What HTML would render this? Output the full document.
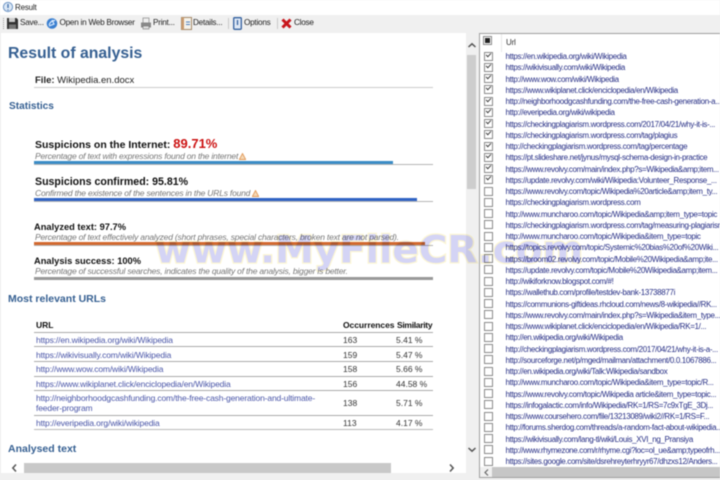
<!DOCTYPE html>
<html><head><meta charset="utf-8"><style>
html,body{margin:0;padding:0;width:720px;height:480px;overflow:hidden;background:#f0f0f0}
#w{position:absolute;left:0;top:0;width:720px;height:480px;overflow:hidden;background:#f0f0f0;font-family:"Liberation Sans",sans-serif;filter:blur(.45px)}
.a{position:absolute;white-space:nowrap}
.t{font-size:8.2px;color:#222;top:17px;line-height:12px;letter-spacing:-.25px}
.h{color:#366092;font-weight:bold}
.b{font-weight:bold;color:#111}
.i{font-style:italic;font-size:8.5px;letter-spacing:-.2px;color:#777}
.l{height:1px;background:#b5b5b5;left:34px;width:399px}
.u{font-size:8.5px;letter-spacing:-.15px;color:#4a56a8;left:36px}
.n{font-size:8.5px;color:#333}
.r{position:absolute;left:480px;width:240px;height:11px}
.c{position:absolute;left:3.5px;top:.5px;width:7px;height:7px;border:1px solid #8a8a8a;background:#fff}
.c.k:after{content:"";position:absolute;left:1px;top:0;width:4px;height:2px;border-left:1px solid #444;border-bottom:1px solid #444;transform:rotate(-45deg)}
.r span{position:absolute;left:25.5px;top:0;font-size:8px;line-height:11px;color:#262e85;letter-spacing:-.34px;white-space:nowrap}
</style></head><body><div id="w">
<div class="a" style="left:0;top:0;width:720px;height:15px;background:#fff"></div>
<svg class="a" style="left:2px;top:1px" width="12" height="12" viewBox="0 0 12 12"><circle cx="6" cy="6" r="4.6" fill="#dbe8f6" stroke="#6d94c4"/><path d="M6 3v4M6 8.5v1" stroke="#3d6ba8" stroke-width="1.3"/></svg>
<div class="a" style="left:15px;top:2px;font-size:8px;line-height:12px;color:#222;letter-spacing:-.2px">Result</div>

<div class="a" style="left:3px;top:18px;width:1px;height:11px;border-left:1px dotted #999"></div>
<svg class="a" style="left:7px;top:18px" width="11" height="11" viewBox="0 0 11 11"><path d="M0 0h9.5l1.5 1.5V11H0z" fill="#333"/><rect x="2" y="0" width="6" height="4" fill="#ccc"/><rect x="2" y="6.5" width="7" height="4.5" fill="#777"/></svg>
<div class="a t" style="left:20px">Save...</div>
<svg class="a" style="left:46px;top:17px" width="12" height="13" viewBox="0 0 12 13"><circle cx="6" cy="6.5" r="5.3" fill="#3a7fd0"/><path d="M3 8c1-3 3-4.500 6-4.500M6 3l2 4-5 2" fill="none" stroke="#dcecff" stroke-width="1.2"/></svg>
<div class="a t" style="left:59.500px">Open in Web Browser</div>
<svg class="a" style="left:140px;top:17px" width="12" height="13" viewBox="0 0 12 13"><rect x="3" y="1" width="6" height="5" fill="#eee" stroke="#888" stroke-width=".7"/><rect x="1" y="5.500" width="10" height="5" fill="#888"/><rect x="3" y="9" width="6" height="3" fill="#ddd" stroke="#777" stroke-width=".6"/></svg>
<div class="a t" style="left:153px">Print...</div>
<svg class="a" style="left:181px;top:17px" width="11" height="13" viewBox="0 0 11 13"><rect x=".5" y=".5" width="10" height="12" fill="#f5f2ea" stroke="#a58a68"/><rect x=".5" y=".5" width="2.500" height="12" fill="#c99a6e"/><path d="M5 5h4M5 7.500h4" stroke="#4d7fc0"/></svg>
<div class="a t" style="left:193px">Details...</div>
<div class="a" style="left:228px;top:18px;width:1px;height:11px;background:#c8c8c8"></div>
<svg class="a" style="left:233px;top:17px" width="9" height="13" viewBox="0 0 9 13"><rect x=".7" y=".7" width="7.600" height="11.600" rx="1" fill="#dfe8f5" stroke="#33609f" stroke-width="1.300"/><path d="M4.500 3v5" stroke="#33609f" stroke-width="1.300"/></svg>
<div class="a t" style="left:244px">Options</div>
<div class="a" style="left:277px;top:18px;width:1px;height:11px;background:#c8c8c8"></div>
<svg class="a" style="left:281px;top:18px" width="11" height="11" viewBox="0 0 11 11"><path d="M1.500 1.500l8 8M9.500 1.500l-8 8" stroke="#c8161c" stroke-width="3"/></svg>
<div class="a t" style="left:294px">Close</div>

<div class="a" style="left:1px;top:33px;width:465px;height:440px;background:#fff"></div>
<div class="a h" style="left:8px;top:44px;font-size:15.800px;line-height:20px">Result of analysis</div>
<div class="a" style="left:35px;top:74px;font-size:9.500px;line-height:13px;color:#222"><b>File:</b> Wikipedia.en.docx</div>
<div class="a" style="left:34px;top:87px;width:399px;height:1px;background:#ccc"></div>
<div class="a h" style="left:9px;top:100px;font-size:10.100px;line-height:13px">Statistics</div>

<div class="a b" style="left:35px;top:137px;font-size:10.500px;line-height:14px">Suspicions on the Internet: <span style="color:#cc1111;font-size:13px;font-weight:bold">89.71%</span></div>
<div class="a i" style="left:35px;top:151px;line-height:11px">Percentage of text with expressions found on the internet</div>
<svg class="a" style="left:239px;top:153px" width="7" height="7"><path d="M3.500 .5L6.700 6.500H.3z" fill="#f4d9b8" stroke="#e29a5a" stroke-width=".9"/></svg>
<div class="a" style="left:34px;top:161px;width:359px;height:3px;background:#3a8cc6"></div>
<div class="a l" style="top:164px"></div>

<div class="a b" style="left:35px;top:175px;font-size:10.600px;line-height:14px">Suspicions confirmed: 95.81%</div>
<div class="a i" style="left:35px;top:188px;line-height:11px">Confirmed the existence of the sentences in the URLs found</div>
<svg class="a" style="left:252px;top:190px" width="7" height="7"><path d="M3.500 .5L6.700 6.500H.3z" fill="#f4d9b8" stroke="#e29a5a" stroke-width=".9"/></svg>
<div class="a" style="left:34px;top:197.500px;width:383px;height:3px;background:#3063c4"></div>
<div class="a l" style="top:201px"></div>

<div class="a b" style="left:34px;top:221px;font-size:9.300px;line-height:12px">Analyzed text: 97.7%</div>
<div class="a i" style="left:35px;top:232px;line-height:11px">Percentage of text effectively analyzed (short phrases, special characters, broken text are not parsed).</div>
<div class="a" style="left:34px;top:242px;width:391px;height:3.500px;background:#d2692f"></div>
<div class="a l" style="top:245px"></div>

<div class="a b" style="left:34px;top:255px;font-size:9.300px;line-height:12px">Analysis success: 100%</div>
<div class="a i" style="left:35px;top:266px;line-height:11px">Percentage of successful searches, indicates the quality of the analysis, bigger is better.</div>
<div class="a" style="left:34px;top:276.500px;width:399px;height:3.500px;background:#999"></div>

<div class="a h" style="left:8px;top:293px;font-size:10.500px;line-height:13px">Most relevant URLs</div>
<div class="a b" style="left:36px;top:320px;font-size:8.500px;line-height:11px">URL</div>
<div class="a b" style="left:343px;top:320px;font-size:8.500px;line-height:11px;letter-spacing:-.05px">Occurrences</div>
<div class="a b" style="left:397px;top:320px;font-size:8.500px;line-height:11px;letter-spacing:-.3px">Similarity</div>
<div class="a" style="left:34px;top:331.500px;width:399px;height:1px;background:#aaa"></div>
<div class="a u" style="top:334px;line-height:12px">https://en.wikipedia.org/wiki/Wikipedia</div><div class="a n" style="left:343px;top:334px;line-height:12px">163</div><div class="a n" style="left:396px;top:334px;line-height:12px">5.41 %</div>
<div class="a l" style="top:346px;background:#aaa"></div>
<div class="a u" style="top:348.500px;line-height:12px">https://wikivisually.com/wiki/Wikipedia</div><div class="a n" style="left:343px;top:348.500px;line-height:12px">159</div><div class="a n" style="left:396px;top:348.500px;line-height:12px">5.47 %</div>
<div class="a l" style="top:361px;background:#aaa"></div>
<div class="a u" style="top:363px;line-height:12px">http://www.wow.com/wiki/Wikipedia</div><div class="a n" style="left:343px;top:363px;line-height:12px">158</div><div class="a n" style="left:396px;top:363px;line-height:12px">5.66 %</div>
<div class="a l" style="top:375.500px;background:#aaa"></div>
<div class="a u" style="top:377.500px;line-height:12px">https://www.wikiplanet.click/enciclopedia/en/Wikipedia</div><div class="a n" style="left:343px;top:377.500px;line-height:12px">156</div><div class="a n" style="left:396px;top:377.500px;line-height:12px">44.58 %</div>
<div class="a l" style="top:390px;background:#aaa"></div>
<div class="a u" style="top:393px;line-height:10px">http://neighborhoodgcashfunding.com/the-free-cash-generation-and-ultimate-<br>feeder-program</div><div class="a n" style="left:343px;top:397px;line-height:12px">138</div><div class="a n" style="left:396px;top:397px;line-height:12px">5.71 %</div>
<div class="a l" style="top:414.500px;background:#aaa"></div>
<div class="a u" style="top:416.500px;line-height:12px">http://everipedia.org/wiki/wikipedia</div><div class="a n" style="left:343px;top:416.500px;line-height:12px">113</div><div class="a n" style="left:396px;top:416.500px;line-height:12px">4.17 %</div>
<div class="a l" style="top:429px;background:#bbb"></div>
<div class="a h" style="left:8px;top:443px;font-size:10.500px;line-height:13px">Analysed text</div>

<svg class="a" style="left:467px;top:42px" width="10" height="7"><path d="M1.500 5L5 1.800 8.500 5" fill="none" stroke="#555" stroke-width="1.500"/></svg>
<div class="a" style="left:467px;top:55px;width:9px;height:134px;background:#cdcdcd"></div>
<svg class="a" style="left:467px;top:446px" width="10" height="7"><path d="M1.500 2L5 5.200 8.500 2" fill="none" stroke="#555" stroke-width="1.500"/></svg>
<svg class="a" style="left:11px;top:463px" width="7" height="10"><path d="M5 1.500L1.800 5 5 8.500" fill="none" stroke="#555" stroke-width="1.500"/></svg>
<div class="a" style="left:24px;top:463px;width:367px;height:10px;background:#c8c8c8"></div>
<svg class="a" style="left:448px;top:463px" width="7" height="10"><path d="M2 1.500L5.200 5 2 8.500" fill="none" stroke="#555" stroke-width="1.500"/></svg>

<div class="a" style="left:479px;top:33px;width:241px;height:445px;background:#fff;border:1px solid #a0a0a0;border-right:0;box-sizing:border-box"></div>
<div class="a" style="left:501px;top:34px;width:1px;height:18px;background:#e8e8e8"></div>
<div class="a" style="left:483px;top:36px;width:7px;height:7px;border:1px solid #888;background:#fff"></div>
<div class="a" style="left:485px;top:38px;width:5px;height:5px;background:#222"></div>
<div class="a" style="left:506px;top:37px;font-size:8px;line-height:11px;color:#333;letter-spacing:-.2px">Url</div>

<div class="r" style="top:51px"><i class="c k"></i><span>https://en.wikipedia.org/wiki/Wikipedia</span></div>
<div class="r" style="top:62.250px"><i class="c k"></i><span>https://wikivisually.com/wiki/Wikipedia</span></div>
<div class="r" style="top:73.500px"><i class="c k"></i><span>http://www.wow.com/wiki/Wikipedia</span></div>
<div class="r" style="top:84.750px"><i class="c k"></i><span>https://www.wikiplanet.click/enciclopedia/en/Wikipedia</span></div>
<div class="r" style="top:96px"><i class="c k"></i><span>http://neighborhoodgcashfunding.com/the-free-cash-generation-a...</span></div>
<div class="r" style="top:107.250px"><i class="c k"></i><span>http://everipedia.org/wiki/wikipedia</span></div>
<div class="r" style="top:118.500px"><i class="c k"></i><span>https://checkingplagiarism.wordpress.com/2017/04/21/why-it-is-...</span></div>
<div class="r" style="top:129.750px"><i class="c k"></i><span>https://checkingplagiarism.wordpress.com/tag/plagius</span></div>
<div class="r" style="top:141px"><i class="c k"></i><span>http://checkingplagiarism.wordpress.com/tag/percentage</span></div>
<div class="r" style="top:152.250px"><i class="c k"></i><span>https://pt.slideshare.net/jynus/mysql-schema-design-in-practice</span></div>
<div class="r" style="top:163.500px"><i class="c k"></i><span>https://www.revolvy.com/main/index.php?s=Wikipedia&amp;amp;item...</span></div>
<div class="r" style="top:174.750px"><i class="c k"></i><span>https://update.revolvy.com/wiki/Wikipedia:Volunteer_Response_...</span></div>
<div class="r" style="top:186px"><i class="c"></i><span>https://www.revolvy.com/topic/Wikipedia%20article&amp;amp;item_ty...</span></div>
<div class="r" style="top:197.250px"><i class="c"></i><span>https://checkingplagiarism.wordpress.com</span></div>
<div class="r" style="top:208.500px"><i class="c"></i><span>http://www.muncharoo.com/topic/Wikipedia&amp;amp;item_type=topic</span></div>
<div class="r" style="top:219.750px"><i class="c"></i><span>https://checkingplagiarism.wordpress.com/tag/measuring-plagiarism</span></div>
<div class="r" style="top:231px"><i class="c"></i><span>http://www.muncharoo.com/topic/Wikipedia&amp;item_type=topic</span></div>
<div class="r" style="top:242.250px"><i class="c"></i><span>https://topics.revolvy.com/topic/Systemic%20bias%20of%20Wiki...</span></div>
<div class="r" style="top:253.500px"><i class="c"></i><span>https://broom02.revolvy.com/topic/Mobile%20Wikipedia&amp;amp;ite...</span></div>
<div class="r" style="top:264.750px"><i class="c"></i><span>https://update.revolvy.com/topic/Mobile%20Wikipedia&amp;amp;item...</span></div>
<div class="r" style="top:276px"><i class="c"></i><span>http://wikiforknow.blogspot.com/#!</span></div>
<div class="r" style="top:287.250px"><i class="c"></i><span>https://wallethub.com/profile/testdev-bank-13738877i</span></div>
<div class="r" style="top:298.500px"><i class="c"></i><span>https://communions-giftideas.rhcloud.com/news/8-wikipedia//RK...</span></div>
<div class="r" style="top:309.750px"><i class="c"></i><span>https://www.revolvy.com/main/index.php?s=Wikipedia&amp;item_type...</span></div>
<div class="r" style="top:321px"><i class="c"></i><span>https://www.wikiplanet.click/enciclopedia/en/Wikipedia/RK=1/...</span></div>
<div class="r" style="top:332.250px"><i class="c"></i><span>http://en.wikipedia.org/wiki/Wikipedia</span></div>
<div class="r" style="top:343.500px"><i class="c"></i><span>http://checkingplagiarism.wordpress.com/2017/04/21/why-it-is-a-...</span></div>
<div class="r" style="top:354.750px"><i class="c"></i><span>http://sourceforge.net/p/mged/mailman/attachment/0.0.1067886...</span></div>
<div class="r" style="top:366px"><i class="c"></i><span>http://en.wikipedia.org/wiki/Talk:Wikipedia/sandbox</span></div>
<div class="r" style="top:377.250px"><i class="c"></i><span>http://www.muncharoo.com/topic/Wikipedia&amp;item_type=topic/R...</span></div>
<div class="r" style="top:388.500px"><i class="c"></i><span>https://www.revolvy.com/topic/Wikipedia article&amp;item_type=topic...</span></div>
<div class="r" style="top:399.750px"><i class="c"></i><span>https://infogalactic.com/info/Wikipedia/RK=1/RS=7c9xTgE_3Dj...</span></div>
<div class="r" style="top:411px"><i class="c"></i><span>https://www.coursehero.com/file/13213089/wiki2//RK=1/RS=F...</span></div>
<div class="r" style="top:422.250px"><i class="c"></i><span>http://forums.sherdog.com/threads/a-random-fact-about-wikipedia...</span></div>
<div class="r" style="top:433.500px"><i class="c"></i><span>https://wikivisually.com/lang-tl/wiki/Louis_XVI_ng_Pransiya</span></div>
<div class="r" style="top:444.750px"><i class="c"></i><span>http://www.rhymezone.com/r/rhyme.cgi?loc=ol_ue&amp;amp;typeofrh...</span></div>
<div class="r" style="top:456px"><i class="c"></i><span>https://sites.google.com/site/dsrehreyterhryyr67/dhzxs12/Anders...</span></div>

<div class="a" style="left:480px;top:467px;width:240px;height:10px;background:#f0f0f0"></div>
<svg class="a" style="left:483px;top:468px" width="7" height="9"><path d="M5 1.500L2 4.500 5 7.500" fill="none" stroke="#666" stroke-width="1.200"/></svg>
<div class="a" style="left:492px;top:467px;width:228px;height:10px;background:#c6c6c6"></div>

<svg class="a" style="left:140px;top:222px;mix-blend-mode:multiply" width="460" height="50"><text x="15" y="40.500" font-family="DejaVu Sans,sans-serif" font-weight="bold" font-size="37" textLength="428" lengthAdjust="spacingAndGlyphs" fill="#d4d4f5" stroke="#fcf6d4" stroke-width="2.500" paint-order="stroke">www.MyFileCR.com</text></svg>
</div></body></html>
